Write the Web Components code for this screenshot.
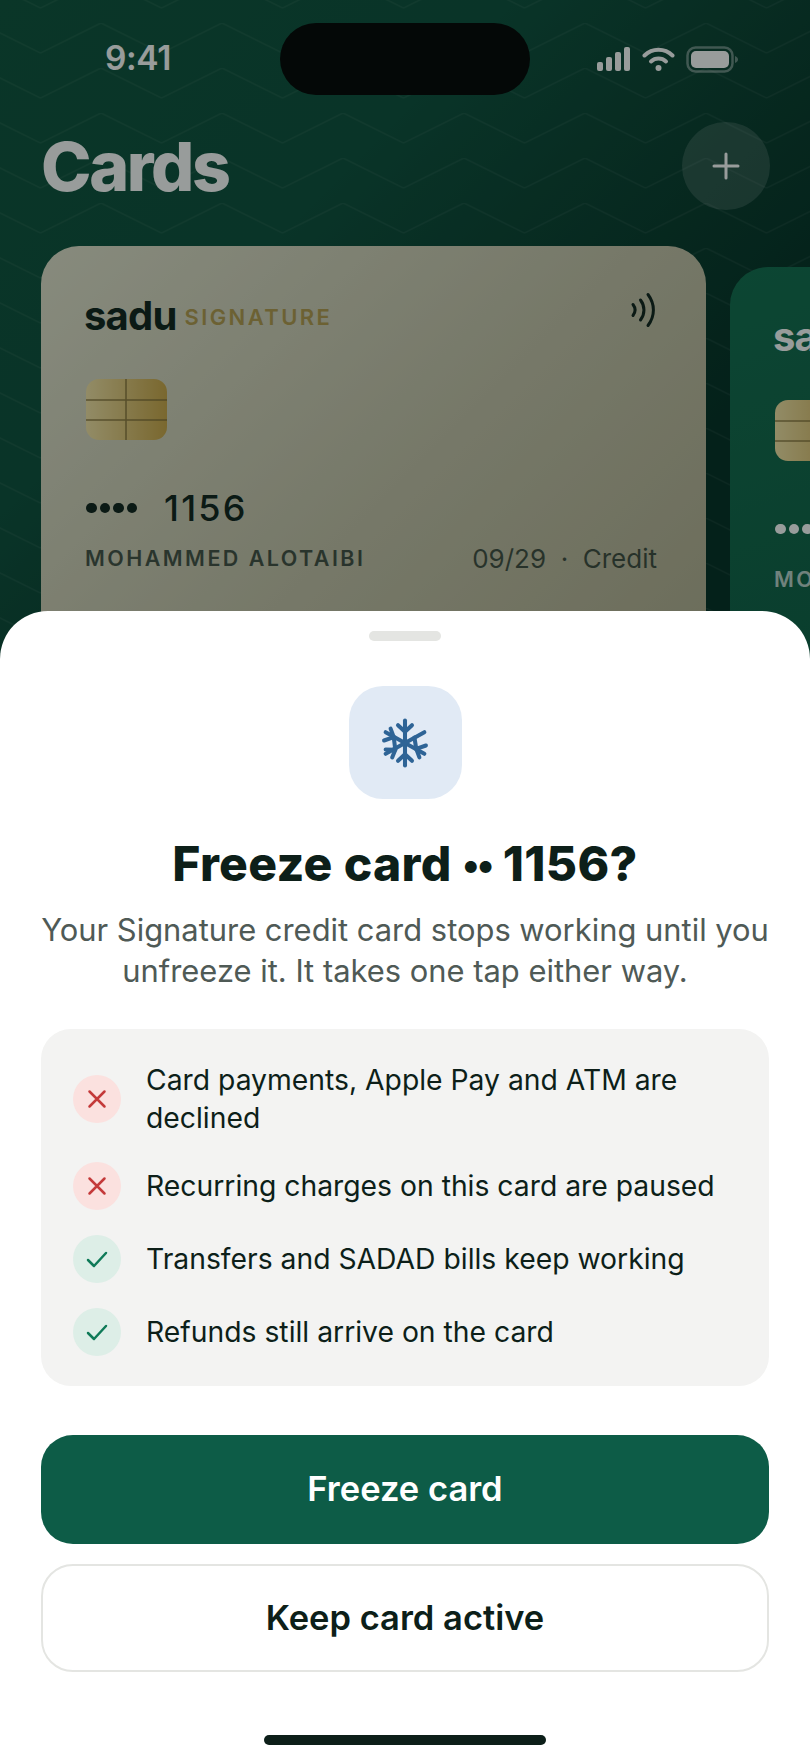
<!DOCTYPE html>
<html lang="en">
<head>
<meta charset="utf-8">
<title>Cards</title>
<style>
  html, body { margin: 0; background: #fff; }
  body { font-family: "Inter", "Liberation Sans", sans-serif; }
</style>
</head>
<body>
<card-screen>
  <status-bar slot="top"></status-bar>
  <screen-header slot="top"></screen-header>
  <card-rail slot="top">
    <bank-card tier="SIGNATURE" digits="1156" meta="09/29 · Credit" holder="MOHAMMED ALOTAIBI"></bank-card>
    <bank-card variant="green" holder="MOHAMMED ALOTAIBI"></bank-card>
  </card-rail>
  <freeze-sheet slot="sheet">
    <consequence-row kind="no">Card payments, Apple Pay and ATM are declined</consequence-row>
    <consequence-row kind="no">Recurring charges on this card are paused</consequence-row>
    <consequence-row kind="yes">Transfers and SADAD bills keep working</consequence-row>
    <consequence-row kind="yes">Refunds still arrive on the card</consequence-row>
  </freeze-sheet>
</card-screen>

<script>
const cardScreenTemplate = document.createElement('template');

cardScreenTemplate.innerHTML = `
  <style>
    :host {
      display: block;
      position: relative;
      width: 810px;
      height: 1761px;
      overflow: hidden;
      background: linear-gradient(135deg, #0b5039 0%, #0a4c39 20%, #053729 35%, #002b21 45%);
    }
    .zigzag {
      position: absolute;
      inset: 0;
      width: 100%;
      height: 100%;
    }
    .top {
      position: relative;
    }
    .scrim {
      position: absolute;
      inset: 0;
      background: rgba(10, 20, 17, .42);
    }
    .sheet {
      position: absolute;
      left: 0;
      right: 0;
      bottom: 0;
    }
  </style>
  <svg class="zigzag" aria-hidden="true">
    <defs>
      <pattern id="zz" width="121" height="45" patternUnits="userSpaceOnUse" patternTransform="translate(40.500 23)">
        <path d="M0 30 L60.500 0 L121 30" fill="none" stroke="#fff" stroke-opacity=".06" stroke-width="1.500"/>
      </pattern>
    </defs>
    <rect width="100%" height="100%" fill="url(#zz)"/>
  </svg>
  <div class="top"><slot name="top"></slot></div>
  <div class="scrim"></div>
  <div class="sheet"><slot name="sheet"></slot></div>
`;

class CardScreen extends HTMLElement {
  constructor() {
    super();
    this.attachShadow({ mode: 'open' }).append(cardScreenTemplate.content.cloneNode(true));
  }
}

const statusBarTemplate = document.createElement('template');

statusBarTemplate.innerHTML = `
  <style>
    :host {
      display: grid;
      grid-template-columns: 280px 250px 1fr;
      align-items: center;
      height: 72px;
      padding-top: 23px;
      color: #fff;
    }
    .time {
      padding-left: 105px;
      font: 600 33.500px/1 "Inter", sans-serif;
      letter-spacing: -.4px;
    }
    .island {
      height: 72px;
      border-radius: 36px;
      background: #000;
    }
    .icons {
      display: flex;
      align-items: center;
      gap: 11px;
      padding-left: 67px;
    }
    svg { display: block; }
  </style>
  <div class="time">9:41</div>
  <div class="island"></div>
  <div class="icons">
    <svg width="34" height="24" viewBox="0 0 34 24" fill="currentColor" aria-hidden="true">
      <rect x="0" y="15" width="6" height="9" rx="2"/>
      <rect x="9" y="10" width="6" height="14" rx="2"/>
      <rect x="18" y="5" width="6" height="19" rx="2"/>
      <rect x="27" y="0" width="6" height="24" rx="2"/>
    </svg>
    <svg width="33" height="24" viewBox="0 0 33 24" fill="none" stroke="currentColor" stroke-width="4" stroke-linecap="round" aria-hidden="true">
      <path d="M2.500 8.500a20 20 0 0 1 28 0"/>
      <path d="M9 14.500a11 11 0 0 1 15 0"/>
      <circle cx="16.500" cy="21" r="3" fill="currentColor" stroke="none"/>
    </svg>
    <svg width="52" height="27" viewBox="0 0 52 27" fill="none" aria-hidden="true">
      <rect x="1.500" y="1.500" width="45" height="24" rx="8" stroke="currentColor" stroke-opacity=".4" stroke-width="2.500"/>
      <rect x="5" y="5" width="38" height="17" rx="5" fill="currentColor"/>
      <path d="M49 10c2 .7 3 2 3 3.500s-1 2.800-3 3.500z" fill="currentColor" fill-opacity=".4"/>
    </svg>
  </div>
`;

class StatusBar extends HTMLElement {
  constructor() {
    super();
    this.attachShadow({ mode: 'open' }).append(statusBarTemplate.content.cloneNode(true));
  }
}

const screenHeaderTemplate = document.createElement('template');

screenHeaderTemplate.innerHTML = `
  <style>
    :host {
      display: flex;
      justify-content: space-between;
      align-items: center;
      height: 88px;
      margin-top: 27px;
      padding: 0 40px 0 41px;
      color: #fff;
    }
    h1 {
      margin: 0;
      font: 800 68px/1 "Inter", sans-serif;
      letter-spacing: -2.400px;
    }
    .add {
      display: flex;
      align-items: center;
      justify-content: center;
      width: 88px;
      height: 88px;
      border-radius: 50%;
      background: rgba(255, 255, 255, .14);
    }
  </style>
  <h1>Cards</h1>
  <div class="add">
    <svg width="28" height="28" viewBox="0 0 28 28" stroke="currentColor" stroke-width="3" stroke-linecap="round" aria-hidden="true">
      <path d="M14 2v24M2 14h24"/>
    </svg>
  </div>
`;

class ScreenHeader extends HTMLElement {
  constructor() {
    super();
    this.attachShadow({ mode: 'open' }).append(screenHeaderTemplate.content.cloneNode(true));
  }
}

const cardRailTemplate = document.createElement('template');

cardRailTemplate.innerHTML = `
  <style>
    :host {
      display: flex;
      align-items: flex-start;
      gap: 24px;
      margin-top: 36px;
      padding-left: 41px;
      overflow: hidden;
    }
  </style>
  <slot></slot>
`;

class CardRail extends HTMLElement {
  constructor() {
    super();
    this.attachShadow({ mode: 'open' }).append(cardRailTemplate.content.cloneNode(true));
  }
}

const bankCardTemplate = document.createElement('template');

bankCardTemplate.innerHTML = `
  <style>
    :host {
      display: block;
      flex: none;
      box-sizing: border-box;
      width: 665px;
      height: 420px;
      padding: 46px 49px 0 45px;
      border-radius: 38px;
      background: linear-gradient(135deg, #e2e1cc 0%, #c5c2a8 55%, #b3ae90 100%);
      color: #0d1f19;
    }
    :host([variant="green"]) {
      margin-top: 21px;
      background: linear-gradient(160deg, #0f6b4c, #0a563e);
      color: #fff;
    }
    .head {
      display: flex;
      align-items: flex-start;
      justify-content: space-between;
      height: 87px;
    }
    .brand {
      display: flex;
      align-items: center;
      gap: 8px;
      margin: 2px 0 0 -2px;
    }
    .logo {
      font: 700 40px/44px "Inter", sans-serif;
      letter-spacing: -.8px;
    }
    .tier {
      margin-top: 1px;
      font: 600 22px/1 "Inter", sans-serif;
      letter-spacing: 2.400px;
      color: #b39a4c;
    }
    .chip {
      position: relative;
      width: 81px;
      height: 61px;
      border-radius: 13px;
      overflow: hidden;
      background: linear-gradient(90deg, #f5e3a5, #cba545);
    }
    .chip svg {
      display: block;
      width: 100%;
      height: 100%;
    }
    .number {
      display: flex;
      align-items: center;
      gap: 27px;
      height: 36px;
      margin-top: 50px;
    }
    .dots {
      display: flex;
      gap: 3px;
    }
    .dots i {
      width: 10.500px;
      height: 10.500px;
      border-radius: 50%;
      background: currentColor;
    }
    .digits {
      font: 500 36px/36px "Inter", sans-serif;
      letter-spacing: 2.200px;
    }
    .foot {
      display: flex;
      align-items: center;
      justify-content: space-between;
      height: 30px;
      margin-top: 18px;
      opacity: .72;
    }
    .holder {
      margin-left: -1px;
      font: 600 21.500px/1 "Inter", sans-serif;
      letter-spacing: 2.450px;
      white-space: nowrap;
    }
    .meta {
      font: 400 26px/1 "Inter", sans-serif;
      white-space: pre;
    }
    :host([variant="green"]) .nfc,
    :host([variant="green"]) .tier { visibility: hidden; }
  </style>
  <div class="head">
    <div class="brand"><span class="logo">sadu</span><span class="tier"></span></div>
    <svg class="nfc" width="27" height="36" viewBox="0 0 27 36" fill="none" stroke="currentColor" stroke-width="3" stroke-linecap="round" aria-hidden="true">
      <path d="M3 12.500c2.600 3.400 2.600 7.600 0 11"/>
      <path d="M10.500 8c4.600 6 4.600 14 0 20"/>
      <path d="M18 2.500c7.200 9.600 7.200 21.400 0 31"/>
    </svg>
  </div>
  <div class="chip">
    <svg viewBox="0 0 81 61" fill="none" stroke="#7a6630" stroke-opacity=".8" stroke-width="1.500" aria-hidden="true">
      <path d="M40 0v61M0 21h81M0 41h81"/>
    </svg>
  </div>
  <div class="number">
    <span class="dots"><i></i><i></i><i></i><i></i></span>
    <span class="digits"></span>
  </div>
  <div class="foot">
    <span class="holder"></span>
    <span class="meta"></span>
  </div>
`;

class BankCard extends HTMLElement {
  constructor() {
    super();
    const shadow = this.attachShadow({ mode: 'open' });
    shadow.append(bankCardTemplate.content.cloneNode(true));
    shadow.querySelector('.tier').textContent = this.getAttribute('tier') || '';
    shadow.querySelector('.digits').textContent = this.getAttribute('digits') || '';
    shadow.querySelector('.holder').textContent = this.getAttribute('holder') || '';
    shadow.querySelector('.meta').textContent = (this.getAttribute('meta') || '').replace(' · ', '  ·  ');
  }
}

const freezeSheetTemplate = document.createElement('template');

freezeSheetTemplate.innerHTML = `
  <style>
    :host {
      display: flex;
      flex-direction: column;
      align-items: center;
      box-sizing: border-box;
      height: 1150px;
      padding: 20px 41px 0;
      border-radius: 48px 48px 0 0;
      background: #fff;
      color: #0d1f19;
      font-family: "Inter", sans-serif;
    }
    .handle {
      flex: none;
      width: 72px;
      height: 10px;
      border-radius: 5px;
      background: #e4e5e2;
    }
    .tile {
      display: flex;
      flex: none;
      align-items: center;
      justify-content: center;
      width: 113px;
      height: 113px;
      margin-top: 45px;
      border-radius: 34px;
      background: #e1eaf5;
      color: #2e6496;
    }
    h2 {
      margin: 37px 0 0;
      font: 800 48px/56px "Inter", sans-serif;
      letter-spacing: .35px;
      white-space: nowrap;
    }
    h2 .pips {
      font-size: 38px;
      letter-spacing: -2px;
      vertical-align: 3px;
    }
    p {
      margin: 17px 0 0;
      width: 100%;
      font: 400 30.900px/41px "Inter", sans-serif;
      color: #4f5a56;
      text-align: center;
      white-space: nowrap;
    }
    .list {
      display: flex;
      flex-direction: column;
      flex: none;
      gap: 25px;
      box-sizing: border-box;
      width: 100%;
      margin-top: 38px;
      padding: 32px 32px 30px;
      border-radius: 30px;
      background: #f3f3f2;
    }
    .actions {
      display: flex;
      flex-direction: column;
      gap: 20px;
      width: 100%;
      margin-top: 49px;
    }
    button {
      height: 109px;
      border: 0;
      border-radius: 32px;
      font: 600 34.500px/1 "Inter", sans-serif;
    }
    .primary {
      background: #0d5c47;
      color: #fff;
    }
    .secondary {
      box-sizing: border-box;
      height: 108px;
      border: 2px solid #e4e5e2;
      background: #fff;
      color: #0d1f19;
    }
    .home {
      flex: none;
      width: 282px;
      height: 10px;
      margin-top: 63px;
      border-radius: 5px;
      background: #0d1f19;
    }
  </style>
  <div class="handle"></div>
  <div class="tile">
    <svg width="54" height="54" viewBox="0 0 24 24" fill="none" stroke="currentColor" stroke-width="1.800" stroke-linecap="round" stroke-linejoin="round" aria-hidden="true">
      <path d="M12 2v20"/>
      <path d="M8.900 4.100L12 7l3.100-2.900"/>
      <path d="M8.900 19.900L12 17l3.100 2.900"/>
      <path d="M3.400 7.200L20.600 16.800"/>
      <path d="M20.600 7.200L3.400 16.800"/>
      <path d="M5.600 5.600L7 9.400l-4.300 1.500"/>
      <path d="M18.400 18.400L17 14.600l4.300-1.500"/>
      <path d="M7 9.400l.7 5.600"/>
      <path d="M3.400 14.900l4.300.1-1.400 3.400"/>
      <path d="M16.200 9.600l.8 5"/>
    </svg>
  </div>
  <h2>Freeze card <span class="pips">••</span> 1156?</h2>
  <p>Your Signature credit card stops working until you<br>unfreeze it. It takes one tap either way.</p>
  <div class="list"><slot></slot></div>
  <div class="actions">
    <button class="primary">Freeze card</button>
    <button class="secondary">Keep card active</button>
  </div>
  <div class="home"></div>
`;

class FreezeSheet extends HTMLElement {
  constructor() {
    super();
    this.attachShadow({ mode: 'open' }).append(freezeSheetTemplate.content.cloneNode(true));
  }
}

const consequenceRowTemplate = document.createElement('template');

consequenceRowTemplate.innerHTML = `
  <style>
    :host {
      display: flex;
      align-items: center;
      gap: 25px;
      min-height: 48px;
      font: 400 28.300px/38px "Inter", sans-serif;
      color: #0d1f19;
    }
    .badge {
      display: flex;
      flex: none;
      align-items: center;
      justify-content: center;
      width: 48px;
      height: 48px;
      border-radius: 50%;
    }
    :host([kind="no"]) .badge { background: #fbe1df; color: #c43a3a; }
    :host([kind="yes"]) .badge { background: #ddeee7; color: #0f7a58; }
    .copy { flex: 1; }
  </style>
  <div class="badge">
    <svg width="24" height="24" viewBox="0 0 24 24" fill="none" stroke="currentColor" stroke-width="2.500" stroke-linecap="round" stroke-linejoin="round" aria-hidden="true">
      <path class="glyph"/>
    </svg>
  </div>
  <div class="copy"><slot></slot></div>
`;

class ConsequenceRow extends HTMLElement {
  constructor() {
    super();
    const shadow = this.attachShadow({ mode: 'open' });
    shadow.append(consequenceRowTemplate.content.cloneNode(true));
    const cross = 'M4.500 4.500l15 15M19.500 4.500l-15 15';
    const tick = 'M3 13l6 6L21 6';
    shadow.querySelector('.glyph').setAttribute('d', this.getAttribute('kind') === 'no' ? cross : tick);
  }
}

customElements.define('card-screen', CardScreen);
customElements.define('status-bar', StatusBar);
customElements.define('screen-header', ScreenHeader);
customElements.define('card-rail', CardRail);
customElements.define('bank-card', BankCard);
customElements.define('freeze-sheet', FreezeSheet);
customElements.define('consequence-row', ConsequenceRow);
</script>
</body>
</html>
